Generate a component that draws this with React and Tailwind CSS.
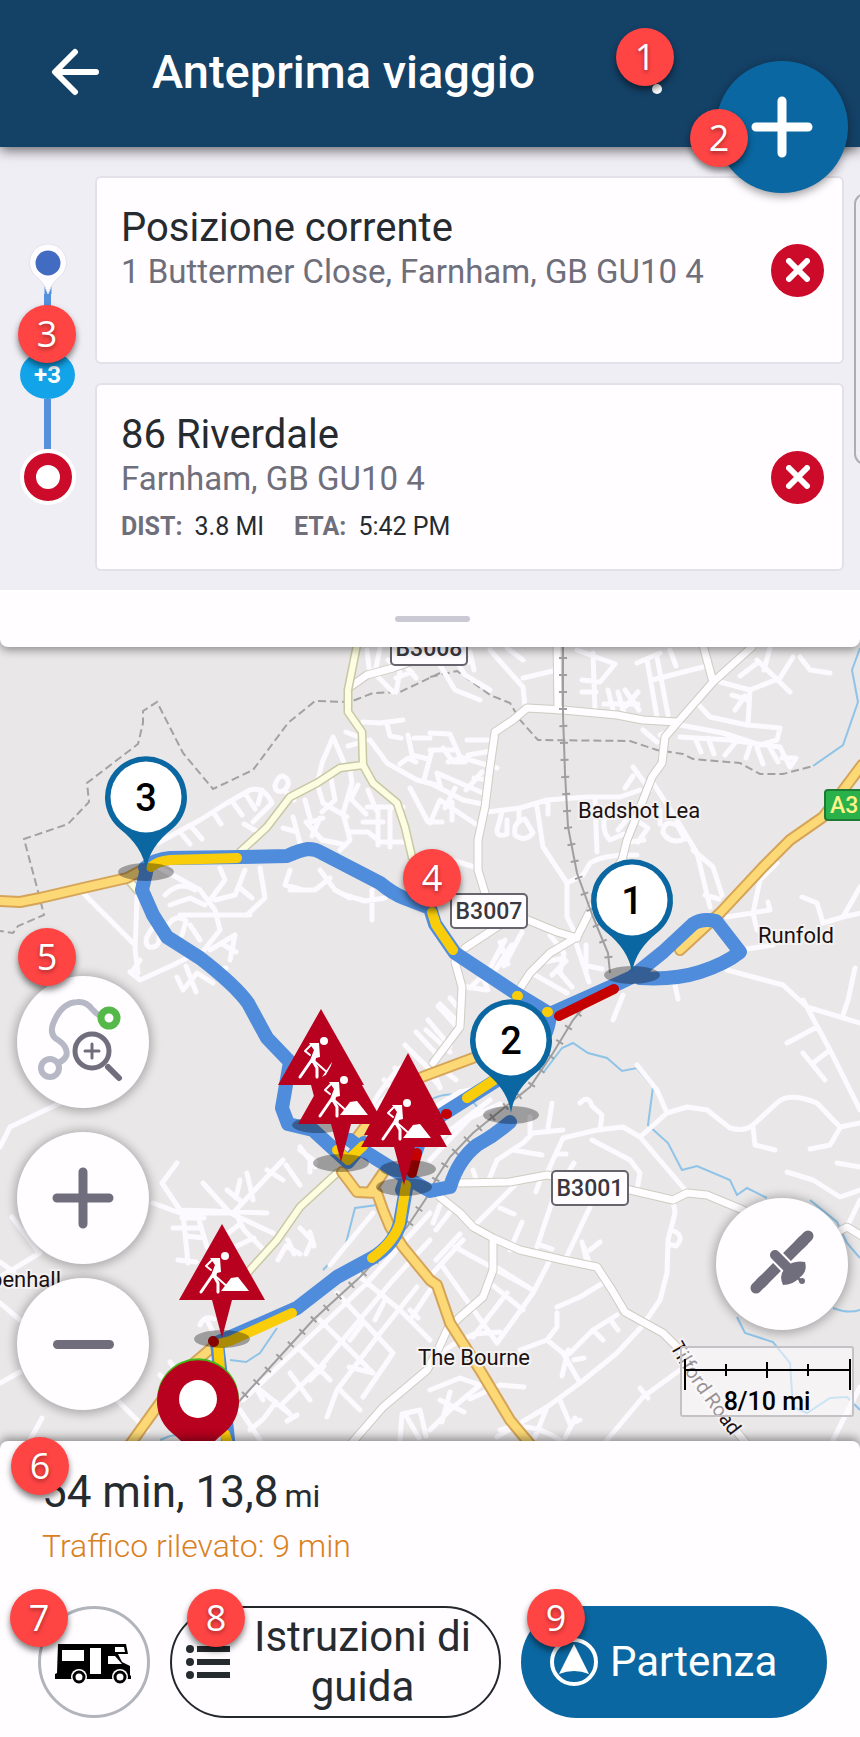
import React from "react";
import clsx from "clsx";

const stops = [
  { id: 1, title: "Posizione corrente", address: "1 Buttermer Close, Farnham, GB GU10 4" },
  { id: 2, title: "86 Riverdale", address: "Farnham, GB GU10 4", dist: "3.8 MI", eta: "5:42 PM" },
];

const minorRoads = [
  "M158 843L200 820L227 803L250 790Q264 786 272 803L253 822",
  "M180 832l10 12M190 825l12 14M213 812l8 12M232 801l10 14M245 793l10 16M262 790l-4 14M244 824l14 8",
  "M275 785q5-14 12-6q4 6-4 12q-8 2-8-6M284 790l10 10",
  "M333 737L322 763L318 780M333 737L345 765M363 722L380 723L403 720M387 724L390 736L401 738M346 732l20 8M348 746l14-4",
  "M370 740L387 763L417 780L440 786M400 764l8-6 8 4M408 735l4 20 16 4M414 738h16M424 780l8-30M410 788l18 34h14",
  "M350 770L352 783L343 813L350 840L340 850M317 783L323 803L347 817M330 773L335 800L322 812M352 800l14 14M358 785l-6 12",
  "M367 807h36M378 807v38M390 807v40M363 822h20M378 842h28M368 790l8 20M350 832h18l10 8",
  "M293 817L300 843M283 828l14 4M305 800l6 22 12-4M306 822l16 18 20 4M320 818l-8 18",
  "M160 868L200 890L215 910L220 930L200 955M165 895Q180 880 195 890M170 905L190 898L205 905M180 915h40M220 915h30",
  "M190 925L200 940M210 900L225 880L220 868M245 870L235 895L215 900M260 868L265 898L248 914M240 888l12 10",
  "M290 870L285 885L303 890M290 890h25l15-12M320 870L335 890L350 898M372 890V920M345 895L365 901L385 898",
  "M155 925q-14 16-6 22q12 2 10-14M210 950L235 935L230 960M222 944l14 8M168 925q8-12 18-4l-4 14",
  "M83 893L133 943M137 897L135 950L138 973M130 972L140 980L173 965L197 953M140 960l-8 12",
  "M177 977L183 990L197 973L213 983M186 966l10 26M200 962l12 10 14-4",
  "M367 650l2 18 14 14 10 10M380 648l-4 20M388 660l12 12-4 20M404 664l12 14M396 678l16-6",
  "M440 665L455 690L480 700M450 650L465 675L490 690M455 648l14 14M470 652l4 18",
  "M490 650L523 687L525 707M523 678L557 670M507 648l16 12M593 653L595 710M577 650L615 664L600 682L582 680M582 692h14",
  "M647 660L657 717M657 657L668 715M637 663L660 653M652 680L703 667M670 650l6 16M608 690l6 24M618 692l6 22M604 704h34M625 690l14 20M638 692l-12 14",
  "M720 682L750 690L780 678L793 657M757 660L790 692M750 690L748 723M732 695L748 700M735 710L745 696M740 676l16-12M770 648l-6 22",
  "M800 657L810 670L830 673M697 703L710 717L747 725L780 728L777 740L760 745L723 733L680 725",
  "M680 737L730 740L780 747L790 767L796 758L782 758M695 738l6 14M708 738l6 16M735 743l-10 12M750 746l-4 12M757 748l6 16M770 748l8 14M660 735l14-6M643 730l14 12",
  "M430 733L450 734L460 757L497 768M467 740h28M443 748l10 14h12M430 750h24M468 755l24-4M462 758l-14 4",
  "M430 783L463 800L487 805M437 773L483 793M430 823L440 800L480 827M452 802v18M437 773l4 16M455 788l-10 20M466 790l16-18M474 778l16 2",
  "M487 812L520 808L547 800L587 797L620 797L640 790M537 807L543 847L567 883L567 917L577 937M548 802v12M625 788l8-12",
  "M502 812L497 830q0 8 10 4v-14M515 835q-2-14 10-16l8 14q-8 10-18 2M519 808v12M478 868l-26-8",
  "M567 883L583 875L590 863Q604 854 637 855M595 800L597 852M606 810q-6 20 4 30l14-6M618 830l12-14M636 820l12 8-10 14M630 842l14-2",
  "M653 783L677 820L697 853L710 907M693 850L713 867L722 895M663 833q0-14 14-8l8 14q-14 6-22-6M633 767L650 790M660 810v14M705 895l14 4",
  "M777 863L760 880L753 913L757 930M727 917L770 910L768 902M860 887L843 917L823 923L817 903L802 897M843 917l18-4",
  "M740 950L773 945M727 970L783 985L807 1007L860 1023M803 1000L830 1050L860 1110M817 1027L787 1043M803 1053L825 1080M813 1063L830 1050M855 968L848 1000L843 1015",
  "M675 985l3 14M623 995L613 1020M505 940l-14 26M512 945l-20 30M522 932l-18 34M500 942l8 22M550 935l14 18-4 20 12 14M544 962l20-4M535 975l32 18M552 975l14-14M575 940l14 42M586 945v28M584 965l18 4",
  "M470 988l12-12 6 14M462 986l24 4M440 1004l22 22M426 1030l24 22M450 998l12 14M405 1045l24 24M416 1032l24 26M428 1020l22 26M438 1006l18 20",
  "M640 1137L667 1113L687 1107L707 1110L730 1128Q745 1132 753 1125L778 1102Q790 1092 817 1103L840 1127L860 1123",
  "M637 1065L657 1090L667 1113M753 1127L755 1145L775 1150M840 1128L830 1145L810 1149M787 1172L813 1180L840 1197L860 1190M837 1163L860 1167M860 1200L847 1227",
  "M687 1192L640 1137L623 1127L597 1130L563 1138L547 1173M563 1130L533 1133L523 1143L497 1160L488 1182M530 1117v16M552 1103L548 1128M580 1103Q588 1094 592 1106L602 1115L600 1130",
  "M592 1140L630 1160L640 1173L637 1190M513 1150L542 1155M558 1154h8M574 1163l-10 16M540 1180l-4 12M473 1170l4 12",
  "M673 1200L675 1213L668 1240L667 1273L660 1300L645 1322M672 1230q14 6 4 16l-8-2",
  "M645 1323L617 1353L580 1383L547 1407L497 1437M680 1370L643 1397L607 1440M640 1388l8 10M590 1207L565 1260M557 1187L537 1247M517 1183L473 1227M522 1222l-12 28M500 1208l14 6",
  "M455 1247L533 1290M433 1223L440 1205M463 1240L433 1273M443 1267L497 1343M550 1260L533 1293L497 1343M493 1265L533 1290M490 1283L523 1310M507 1293L473 1337M450 1212l-14 18M436 1260l24-26",
  "M603 1283L580 1297L557 1307M617 1315L593 1330L570 1353M557 1313L557 1327L547 1340L563 1353L580 1383M520 1350L547 1340M593 1330l10 10M612 1322l6 8M584 1247l6 18M590 1250l10-8M582 1242l4 16M540 1245l12 4",
  "M568 1350l-6 26M574 1360l10-2M430 1390L460 1378L480 1385L450 1410L430 1430M440 1400l24 12M450 1392l-8 30M500 1385l24 2M500 1385l-30 14M547 1407l-12 30M560 1400l10 24 10-4M575 1418l-10 20",
  "M860 1387L843 1420L833 1440M500 1430q30-10 60 10M430 1360l24-16 20-10 26-2",
  "M60 1103L10 1127L0 1147M177 1163L162 1183L180 1210L267 1213M153 1203L180 1213L233 1213L283 1160M203 1183L230 1213L273 1233M183 1213L188 1263M173 1228h27",
  "M197 1213L207 1247M227 1190l15 12M247 1173L253 1200M267 1170L283 1180M300 1147l15 20M182 1218h22M178 1260l18 2M186 1236l18 2M240 1180l-4 18M236 1214l8 16 20 20M214 1244l26-20M224 1252l30-14",
  "M12 1217L37 1250M40 1253L0 1277M0 1303L20 1320M0 1383L20 1372M117 1400L147 1430M30 1440L42 1418M0 1262l14 10",
  "M278 1260l8-14 14 8M300 1228l12 12-6 14M288 1240l6 14M310 1232l4 14M200 1325q4-10 14-6M206 1318l6 12M160 1375l10 10M170 1362l8 12",
  "M373 1213L330 1265M430 1213L367 1283L293 1353L243 1400M430 1240L393 1280L320 1367L283 1403M360 1277L400 1310L430 1340M337 1293L393 1353M320 1320L373 1373",
  "M417 1287L377 1337L337 1390L327 1417M290 1373L310 1400M260 1390L290 1414L282 1406M255 1386l8 14M300 1350l30 30M393 1353l-30 44M373 1373l-24-6M340 1390l20 20M350 1340l14-18M410 1310l8 8",
  "M400 1440l2-26 18-4 6 26M405 1414l14 24M276 1402l-12 16M297 1415l-10 6M240 1410l20 30M262 1420l-12 10M310 1380l14-14M385 1300l-10 20M430 1290l-20 30",
  "M366 1115L380 1092L397 1070L410 1062M376 1108L392 1090M384 1080l12 12M395 1068l10 12M430 1075l10 12M440 1088l-6-16M456 1080l-10-8M362 1128l12-14",
  "M430 1110L460 1092L520 1080M430 1160L470 1118L500 1104M437 1140L490 1100M300 1150l16 12M286 1165l14 20M310 1158v14",
];

const secondaryRoads = [
  "M350 687L367 675L393 668L430 655",
  "M557 640L558 710",
  "M752 647L713 682L677 723L665 737L662 763L652 777L643 800L627 840L622 860L597 897L577 937L550 953L530 973L517 993",
  "M703 645L713 682M677 722L643 720L617 715L563 710L527 708L513 720L495 732L490 767L485 807L478 840L478 870L485 893",
  "M528 920L557 932L577 938M500 925L465 948",
  "M455 962L462 987L460 1027L433 1063",
  "M460 1183L510 1182L547 1175L630 1190L673 1200L687 1193L707 1195L743 1210M830 1236L847 1227L862 1236",
  "M440 1197L460 1213L473 1227L493 1238L520 1250L563 1260L597 1267L612 1290L625 1312L643 1322L663 1333L680 1350L697 1383L750 1448",
  "M493 1238L493 1270L483 1297L460 1317L447 1330L438 1350L427 1370L383 1407L350 1445",
];

const paleRoads =
  "M358 640L348 690L348 712L362 732L363 765L373 783L397 803L405 827L412 857L430 885M363 765L340 768L317 783L290 797L267 827L240 852M127 878L137 890M337 1173L300 1207L277 1240L250 1270L235 1290";

const mainRoads =
  "M0 901L20 902L40 898L83 888L127 878L146 868M862 765L847 785L823 817L790 840L763 867L720 913L680 950M342 1172L357 1192L377 1193L383 1210L390 1227L403 1247L430 1280L437 1285L450 1323L480 1370L510 1420L535 1450M370 1192L383 1173M422 1077L473 1058M370 1120L353 1143M215 1345L180 1375L126 1450";

const rivers =
  "M543 1073L562 1048L573 1043L588 1053L607 1058L622 1071L637 1068L653 1087L648 1125L668 1143L682 1170L697 1166L730 1180L737 1195L747 1188L767 1198M737 1317L745 1333L773 1342L790 1363L793 1407L807 1413L830 1398L847 1397L860 1410M810 1200L837 1222L847 1243L860 1258M833 1308Q848 1314 860 1310M377 1205L355 1208L345 1247L323 1270M277 1328L260 1353L246 1362L230 1360M430 1100Q448 1090 470 1098L478 1108M160 1440l10-4 16-2M813 766L843 745L858 702L852 670L860 648";

const boundary =
  "M440 673L400 692L373 693L350 702L315 701L288 723L253 770L213 789L183 753L157 702L143 711L143 723L138 744L87 783L89 802L68 824L24 839L39 895L44 915L18 926L13 933L0 931M430 677L457 671L490 695L510 703L520 720L538 740L630 741L657 750L683 754L693 759L740 763L760 774L783 774L813 766";

const railway =
  "M563 640L563 715L565 773L568 827L577 873L593 917L608 953L610 973M590 1000L573 1020L553 1053L530 1087L510 1103L473 1133L450 1157L437 1177L427 1197L407 1227L360 1277L313 1320L243 1397L205 1440";

const route =
  "M145 868Q155 859 170 858L240 857L287 856Q300 850 308 849Q316 849 322 853L380 883Q392 893 404 898L430 908L435 924L455 953L517 994L550 1014L615 985L632 977L663 952L693 924Q702 918 716 921L740 952Q725 964 700 972Q675 980 640 978M550 1014Q548 1040 530 1052L497 1080L440 1116L420 1140L402 1190M510 1122Q495 1135 477 1145Q458 1160 450 1187L430 1191L407 1178L367 1153L350 1140M147 868L142 890L153 915L167 937L200 958Q235 985 248 1003L267 1038L290 1062L286 1085L282 1108L288 1124L313 1130L337 1152L348 1162L364 1143M407 1183L400 1223Q394 1245 372 1258L337 1277L297 1308L217 1343L219 1360L227 1430L229 1450";

const yellowTraffic =
  "M151 867Q158 861 170 860L237 858M432 912L436 925L453 950M517 996l1 0M547 1012l1 0M467 1098L497 1078M337 1150L348 1160L363 1146M406 1185L400 1223Q394 1242 372 1258M292 1313L230 1341L218 1344L220 1370L224 1400M225 1434L230 1450";

const redTraffic = "M559 1016L614 989M446 1114l1 0M417 1153L412 1173M213 1341l1 1";

const Badge = ({ n, className }) => (
  <span
    className={clsx(
      "absolute z-30 flex size-[58px] items-center justify-center rounded-full bg-[#ff4444] text-[36px] leading-none text-white font-['Open_Sans',sans-serif] shadow-[0_4px_6px_rgba(0,0,0,0.5)] [text-shadow:0_2px_4px_rgba(0,0,0,0.4)]",
      className
    )}
  >
    {n}
  </span>
);

const Plus = ({ className }) => (
  <svg viewBox="0 0 62 62" className={className} fill="none" stroke="currentColor" strokeWidth="9" strokeLinecap="round">
    <path d="M31 5v52M5 31h52" />
  </svg>
);

const Header = () => (
  <header className="relative z-20 flex h-[147px] items-center bg-[#144166] pb-1 pl-[51px] text-white shadow-[0_3px_12px_rgba(0,0,0,0.6)]">
    <button type="button" aria-label="Indietro">
      <svg viewBox="0 0 48 48" className="size-12" fill="none" stroke="currentColor" strokeWidth="6" strokeLinecap="round" strokeLinejoin="round">
        <path d="M45 24H5M24 4L4 24L24 44" />
      </svg>
    </button>
    <h1 className="ml-[53px] flex-1 text-[47px] leading-[56px] font-medium">Anteprima viaggio</h1>
    <button type="button" aria-label="Altre opzioni" className="absolute top-[50px] right-[197px]">
      <svg viewBox="0 0 12 46" className="h-[46px] w-3" fill="currentColor">
        <circle cx="6" cy="7" r="5" />
        <circle cx="6" cy="23" r="5" />
        <circle cx="6" cy="39" r="5" />
      </svg>
    </button>
    <button
      type="button"
      aria-label="Aggiungi tappa"
      className="absolute top-[61px] right-3 flex size-[132px] items-center justify-center rounded-full bg-[#0b67a1] shadow-[0_3px_10px_rgba(0,0,0,0.4)]"
    >
      <Plus className="size-[62px]" />
    </button>
    <Badge n={1} className="top-7 right-[186px]" />
    <Badge n={2} className="top-[109px] right-28" />
  </header>
);

const StopCard = ({ stop }) => (
  <li className="flex h-[188px] items-center rounded-md border-2 border-[#e2e0e9] bg-[#fffdff] pr-[18px] pl-6">
    <div className="flex-1 self-start pt-[26px]">
      <h2 className="text-[40px] leading-[48px] text-[#262b2f]">{stop.title}</h2>
      <p className="text-[33px] leading-10 text-[#6f6f7b]">{stop.address}</p>
      {stop.dist && (
        <dl className="mt-3 flex text-[25px] leading-8 text-[#262b2f]">
          <dt className="font-bold text-[#6f6f7b]">DIST:</dt>
          <dd className="mr-[30px] ml-3">{stop.dist}</dd>
          <dt className="font-bold text-[#6f6f7b]">ETA:</dt>
          <dd className="ml-3">{stop.eta}</dd>
        </dl>
      )}
    </div>
    <button type="button" aria-label={`Rimuovi ${stop.title}`} className="flex size-[53px] items-center justify-center rounded-full bg-[#cc0a2a] text-white">
      <svg viewBox="0 0 24 24" className="size-6" stroke="currentColor" strokeWidth="6" strokeLinecap="round">
        <path d="M3 3L21 21M21 3L3 21" />
      </svg>
    </button>
  </li>
);

const Stops = () => (
  <section className="relative z-10 overflow-hidden rounded-b-lg bg-[#fffdff] shadow-[0_3px_10px_rgba(0,0,0,0.4)]">
    <div className="relative flex bg-[#f0eef5] pr-4 pb-[19px]">
      <div className="flex w-[95px] flex-col items-center pt-[95px]">
        <svg viewBox="0 0 48 52" className="h-[52px] w-12">
          <path d="M20.500 40h7v12h-7z" fill="#5490dc" />
          <path d="M24 52Q21 42 14 36A18.500 18.500 0 1 1 34 36Q27 42 24 52z" fill="#fffdff" stroke="#e4e1ea" strokeWidth="1" />
          <circle cx="24" cy="21" r="12.500" fill="#426bc2" />
        </svg>
        <span className="h-[57px] w-[7px] bg-[#5490dc]" />
        <button type="button" className="h-12 w-[55px] rounded-[50%] bg-[#12a3e8] text-[24px] leading-none font-bold text-white">
          +3
        </button>
        <span className="h-[50px] w-[7px] bg-[#5490dc]" />
        <span className="flex size-14 items-center justify-center rounded-full bg-white">
          <span className="size-12 rounded-full border-12 border-[#cc0a2a] bg-white" />
        </span>
      </div>
      <ul className="mt-[29px] flex flex-1 flex-col gap-[19px]">
        {stops.map((stop) => (
          <StopCard key={stop.id} stop={stop} />
        ))}
      </ul>
      <span className="absolute top-[46px] -right-4 h-[272px] w-[22px] rounded-xl border-2 border-[#aeadb3]" />
      <Badge n={3} className="top-[158px] left-[18px]" />
    </div>
    <div className="flex h-[57px] items-center justify-center pl-1">
      <span className="h-1.5 w-[75px] rounded-full bg-[#cbc9d3]" />
    </div>
  </section>
);

const WaypointPin = ({ x, y, n }) => (
  <g transform={`translate(${x} ${y})`}>
    <ellipse cy="75" rx="28" ry="9" fill="#000" opacity="0.32" />
    <path d="M0 73Q-3 50 -26 32A41 41 0 1 1 26 32Q3 50 0 73z" fill="#0b67a1" />
    <circle r="35.500" fill="#fff" />
    <text y="14" textAnchor="middle" className="fill-black text-[38px] font-medium">
      {n}
    </text>
  </g>
);

const RoadWorks = ({ x, y, pile = true }) => (
  <g transform={`translate(${x} ${y})`}>
    <path d="M0 0L43 76H10L0 114L-10 76H-43z" fill="#b8001f" />
    <g fill="none" stroke="#fff" strokeLinecap="round" strokeLinejoin="round">
      <path d="M-10 36L-16 42L-11 46M-9 50L8 65" strokeWidth="2" />
      <path d="M-10 52L-21 68M-8 52L-4 59L-4 68" strokeWidth="3" />
    </g>
    <path d="M-12 34H-2L-1 48L-5 49L-6 54L-12 54L-7 41z" fill="#fff" />
    <circle cx="3" cy="32" r="4" fill="#fff" />
    {pile ? <path d="M-1 67L9 54L16 53L27 67z" fill="#fff" /> : <path d="M11 53L1 68Q5 65 8 66z" fill="#fff" />}
  </g>
);

const RoadSign = ({ x, y, label }) => (
  <g transform={`translate(${x} ${y})`}>
    <rect width="76" height="34" rx="4" fill="#fffdff" stroke="#66646c" strokeWidth="2" />
    <text x="38" y="25" textAnchor="middle" className="fill-[#3a383e] text-[23px] font-medium">
      {label}
    </text>
  </g>
);

const placeText = "fill-[#1c1112] text-[22px] [paint-order:stroke] stroke-[#f4f2f2] stroke-4";

const RouteMap = () => (
  <svg viewBox="0 639 860 810" className="block h-auto w-full" role="img" aria-label="Mappa del percorso">
    <rect y="639" width="860" height="810" fill="#e9e7e7" />
    <path d={rivers} fill="none" stroke="#8fc4e8" strokeWidth="2" />
    <path d={boundary} fill="none" stroke="#a3a2a2" strokeWidth="2" strokeDasharray="8 4" />
    <g fill="none" strokeLinecap="round" strokeLinejoin="round">
      <path d={minorRoads.join("")} stroke="#fcfaff" strokeWidth="5" />
      <path d={secondaryRoads.join("")} stroke="#cdcdc2" strokeWidth="9" />
      <path d={secondaryRoads.join("")} stroke="#fffdff" strokeWidth="7" />
      <path d={paleRoads} stroke="#c8c8a6" strokeWidth="9" />
      <path d={paleRoads} stroke="#fdfde2" strokeWidth="6" />
      <path d={mainRoads} stroke="#d5a458" strokeWidth="12" />
      <path d={mainRoads} stroke="#fdd975" strokeWidth="8" />
    </g>
    <path d={railway} fill="none" stroke="#a09fa0" strokeWidth="2" />
    <path d={railway} fill="none" stroke="#a09fa0" strokeWidth="8" strokeDasharray="2 15" />

    <text x="578" y="818" className={placeText}>Badshot Lea</text>
    <text x="758" y="943" className={placeText}>Runfold</text>
    <text x="418" y="1365" className={placeText}>The Bourne</text>
    <text x="61" y="1287" textAnchor="end" className={placeText}>Dippenhall</text>
    <path id="tilford" d="M670 1347Q690 1384 742 1450" fill="none" />
    <text className="fill-[#1c1112] text-[20px] [paint-order:stroke] stroke-[#f4f2f2] stroke-4">
      <textPath href="#tilford">Tilford Road</textPath>
    </text>

    <g fill="none" strokeLinecap="round" strokeLinejoin="round">
      <path d={route} stroke="#4f8cdb" strokeWidth="14" />
      <path d={yellowTraffic} stroke="#facd0a" strokeWidth="10" />
      <path d={redTraffic} stroke="#c40000" strokeWidth="10" />
    </g>

    <RoadSign x={391} y={631} label="B3008" />
    <RoadSign x={451} y={894} label="B3007" />
    <RoadSign x={552} y={1171} label="B3001" />
    <rect x="825" y="790" width="60" height="30" rx="3" fill="#2bb14a" stroke="#1d7a35" strokeWidth="2" />
    <text x="830" y="813" className="fill-[#fff48a] text-[23px] font-medium">A31</text>

    <g fill="#000" opacity="0.32">
      <ellipse cx="318" cy="1125" rx="26" ry="8" />
      <ellipse cx="341" cy="1163" rx="28" ry="9" />
      <ellipse cx="408" cy="1169" rx="28" ry="9" />
      <ellipse cx="404" cy="1187" rx="28" ry="9" />
      <ellipse cx="222" cy="1339" rx="28" ry="9" />
    </g>
    <RoadWorks x={321} y={1009} pile={false} />
    <RoadWorks x={341} y={1048} />
    <RoadWorks x={408} y={1059} />
    <path d="M408 1053L452 1135H364z" fill="#b8001f" />
    <RoadWorks x={404} y={1071} />
    <RoadWorks x={222} y={1224} />

    <g transform="translate(198 1399)">
      <path d="M0 73Q-3 50 -26 32A41 41 0 1 1 26 32Q3 50 0 73z" fill="#44b71c" />
      <path d="M0 75Q-3 52 -26 34A41 41 0 1 1 26 34Q3 52 0 75z" fill="#b8001f" />
      <circle r="19" fill="#fff" />
    </g>
    <WaypointPin x={146} y={797} n={3} />
    <WaypointPin x={632} y={900} n={1} />
    <WaypointPin x={511} y={1040} n={2} />

    <rect x="681" y="1347" width="172" height="69" rx="2" fill="#fffdff" fillOpacity="0.55" stroke="#c4c2c6" strokeWidth="2" />
    <path d="M685 1359v31M850 1359v31M685 1370h165M726 1364v12M767 1362v16M808 1364v12" stroke="#000" strokeWidth="2" />
    <text x="767" y="1410" textAnchor="middle" className="fill-black text-[25px] font-medium">8/10 mi</text>
  </svg>
);

const mapButton =
  "flex size-[132px] items-center justify-center rounded-full bg-[#fffdff] text-[#706e7c] shadow-[0_1px_10px_3px_rgba(0,0,0,0.25)]";

const MapArea = () => (
  <main className="relative -my-2">
    <RouteMap />
    <div className="absolute top-[337px] left-[17px] flex flex-col">
      <button type="button" aria-label="Mostra tutto il percorso" className={clsx(mapButton, "mb-6")}>
        <svg viewBox="0 0 132 132" className="size-full" fill="none" strokeLinecap="round">
          <path d="M39 88Q54 82 48 71Q46 67 38 62Q33 57 36 48Q44 27 60 26Q69 25 75 33Q79 38 84 40" stroke="#b6b8c6" strokeWidth="6" />
          <circle cx="33" cy="92" r="9" fill="#fffdff" stroke="#b6b8c6" strokeWidth="6" />
          <circle cx="92" cy="42" r="8" fill="#fffdff" stroke="#54b948" strokeWidth="7" />
          <circle cx="75" cy="75" r="20" fill="#fffdff" />
          <g stroke="currentColor">
            <circle cx="75" cy="75" r="17" strokeWidth="5" />
            <path d="M75 68v14M68 75h14" strokeWidth="3" />
            <path d="M91 91L102 102" strokeWidth="6" />
          </g>
        </svg>
      </button>
      <button type="button" aria-label="Ingrandisci" className={clsx(mapButton, "mb-3.5")}>
        <Plus className="size-[62px]" />
      </button>
      <button type="button" aria-label="Riduci" className={mapButton}>
        <span className="h-[9px] w-[61px] rounded-full bg-current" />
      </button>
    </div>
    <button type="button" aria-label="Vista satellite" className={clsx(mapButton, "absolute top-[559px] right-3")}>
      <svg viewBox="0 0 132 132" className="size-full" stroke="currentColor" fill="currentColor">
        <path d="M92 38L84 46M40 90L48 82" strokeWidth="11" strokeLinecap="round" />
        <path d="M88 42L71 59M44 86L61 69" strokeWidth="11" />
        <path d="M59 57L76 74" stroke="#fffdff" strokeWidth="13" strokeLinecap="round" />
        <path d="M59 57L76 74" strokeWidth="10" strokeLinecap="round" />
        <path d="M89 64Q92 74 83 80Q77 87 67 87Q62 76 70 70Q76 62 89 64z" stroke="none" />
        <path d="M76 74L85 83" strokeWidth="3" />
        <circle cx="86" cy="83" r="3" stroke="none" />
      </svg>
    </button>
    <Badge n={4} className="top-[210px] left-[403px]" />
    <Badge n={5} className="top-[289px] left-[18px]" />
  </main>
);

const Footer = () => (
  <footer className="relative z-10 rounded-t-lg bg-[#fffdff] pt-[25px] pr-[33px] pb-[19px] pl-[38px] shadow-[0_-3px_10px_rgba(0,0,0,0.4)]">
    <p className="flex items-baseline pl-1 text-[44px] leading-[52px] text-[#262b2f]">
      54 min, 13,8<span className="ml-1.5 text-[32px] leading-none">mi</span>
    </p>
    <p className="mt-1 pl-1 text-[32px] leading-[48px] font-light text-[#d9811e]">Traffico rilevato: 9 min</p>
    <div className="mt-9 flex items-center gap-5">
      <button type="button" aria-label="Profilo veicolo" className="size-28 shrink-0 rounded-full border-3 border-[#b2b4bc]">
        <svg viewBox="3 3 106 106" className="size-full">
          <path d="M20 38H88L90 48H80L84 56L92 60V69L93 70V73H17V68L19 67z" fill="#000" />
          <path d="M24 44h22v11H24zM52 42h11v26H52zM77 41h9l1 5H77zM70 50h7l7 8H70z" fill="#fff" />
          <g fill="#fff">
            <circle cx="41" cy="71" r="8" />
            <circle cx="82" cy="71" r="8" />
          </g>
          <g fill="#fff" stroke="#000" strokeWidth="3">
            <circle cx="41" cy="71" r="5" />
            <circle cx="82" cy="71" r="5" />
          </g>
        </svg>
      </button>
      <button type="button" className="flex h-28 flex-[289] items-center rounded-full border-2 border-[#24282b] pr-6 pl-3.5 text-[42px] leading-[50px] text-[#262b2f]">
        <svg viewBox="0 0 44 36" className="h-9 w-11 shrink-0" fill="currentColor">
          <path d="M11 2h33v6H11zM11 15h33v6H11zM11 28h33v6H11z" />
          <circle cx="4" cy="5" r="4" />
          <circle cx="4" cy="18" r="4" />
          <circle cx="4" cy="31" r="4" />
        </svg>
        <span className="ml-5 flex-1">Istruzioni di guida</span>
      </button>
      <button type="button" className="flex h-28 flex-[277] items-center gap-3 rounded-full bg-[#0b67a1] pl-[29px] text-[42px] leading-[50px] text-white">
        <svg viewBox="0 0 48 48" className="size-12 shrink-0">
          <circle cx="24" cy="24" r="22" fill="none" stroke="currentColor" strokeWidth="4" />
          <path d="M24 6L39 36Q24 30 9 36z" fill="currentColor" />
        </svg>
        Partenza
      </button>
    </div>
    <Badge n={6} className="-top-1 left-[11px]" />
    <Badge n={7} className="top-[148px] left-2.5" />
    <Badge n={8} className="top-[148px] left-[187px]" />
    <Badge n={9} className="top-[148px] right-[275px]" />
  </footer>
);

const App = () => {
  return (
    <div className="overflow-hidden bg-[#fffdff] font-[Roboto,sans-serif]">
      <Header />
      <Stops />
      <MapArea />
      <Footer />
    </div>
  );
};

export default App;
